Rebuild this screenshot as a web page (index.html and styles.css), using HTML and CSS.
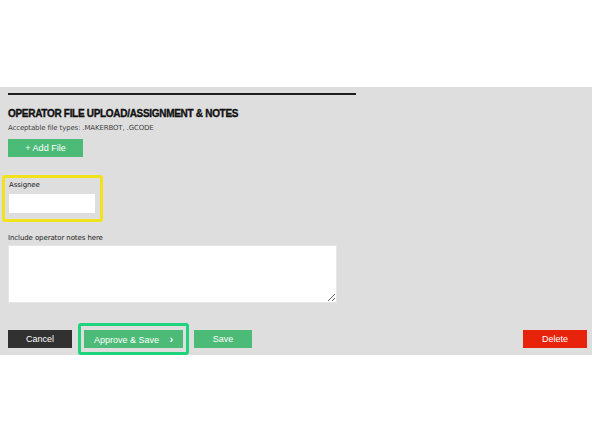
FILE: index.html
```html
<!DOCTYPE html>
<html lang="en">
<head>
    <meta charset="UTF-8">
    <meta name="viewport" content="width=device-width, initial-scale=1.0">
    <title>Operator File Upload</title>
    <link rel="stylesheet" href="styles.css">
</head>
<body>
    <div class="panel">
        <div class="rule"></div>
        <h2>OPERATOR FILE UPLOAD/ASSIGNMENT &amp; NOTES</h2>
        <p class="hint">Acceptable file types: .MAKERBOT, .GCODE</p>
        <button class="btn btn-green btn-add">+ Add File</button>

        <div class="highlight-yellow">
            <label for="assignee">Assignee</label>
            <input type="text" id="assignee" class="input-field">
        </div>

        <div class="form-group">
            <label for="notes">Include operator notes here</label>
            <textarea id="notes" class="notes"></textarea>
        </div>

        <div class="actions">
            <button class="btn btn-dark">Cancel</button>
            <div class="highlight-green">
                <button class="btn btn-green btn-approve">Approve &amp; Save <span class="chev">&#8250;</span></button>
            </div>
            <button class="btn btn-green btn-save">Save</button>
            <button class="btn btn-red">Delete</button>
        </div>
    </div>
</body>
</html>
```

FILE: styles.css
```css
body {
    margin: 0;
    padding: 0;
    background-color: #fff;
    font-family: "DejaVu Sans", Verdana, sans-serif;
    color: #222;
}

.panel {
    margin-top: 87px;
    padding: 6px 5px 0 8px;
    height: 262px;
    background-color: #dedede;
}

.rule {
    width: 348px;
    border-top: 2px solid #1e1e1e;
}

h2 {
    margin: 12px 0 0 0;
    font-family: "Liberation Sans", Arial, sans-serif;
    font-size: 10px;
    font-weight: bold;
    line-height: 13px;
    letter-spacing: -0.3px;
    -webkit-text-stroke: 0.35px #111;
    color: #111;
}

.hint {
    margin: 3px 0 0 0;
    font-size: 7px;
    line-height: 10px;
    letter-spacing: -0.15px;
    color: #444;
}

.btn {
    display: block;
    height: 18px;
    padding: 0;
    border: none;
    font-family: "Liberation Sans", Arial, sans-serif;
    font-size: 9px;
    color: #fff;
    cursor: pointer;
}

.btn-green {
    background-color: #4dbb78;
}

.btn-dark {
    background-color: #313131;
    width: 64px;
}

.btn-red {
    background-color: #e8230b;
    width: 64px;
    margin-left: auto;
}

.btn-add {
    margin-top: 6px;
    width: 75px;
}

.highlight-yellow {
    width: 86px;
    margin: 18px 0 0 -6px;
    padding: 2px 5px 6px 4px;
    border: 3px solid #f2e21c;
    border-radius: 3px;
}

label {
    display: block;
    font-size: 7px;
    line-height: 10px;
    letter-spacing: -0.1px;
    color: #222;
}

.highlight-yellow label {
    margin-bottom: 4px;
}

.input-field {
    display: block;
    width: 86px;
    height: 19px;
    padding: 0;
    border: none;
    background-color: #fff;
    box-sizing: border-box;
}

.form-group {
    margin-top: 11px;
}

.form-group label {
    margin-bottom: 2px;
}

.notes {
    display: block;
    width: 329px;
    height: 58px;
    padding: 0;
    border: 1px solid #e6e6e6;
    background-color: #fff;
    box-sizing: border-box;
}

.actions {
    display: flex;
    align-items: center;
    margin-top: 20px;
}

.highlight-green {
    margin-left: 6px;
    padding: 4px 3px 4px 3px;
    border: 3px solid #1fd47c;
    border-radius: 3px;
}

.btn-approve {
    width: 99px;
}

.chev {
    margin-left: 8px;
    font-weight: bold;
    font-size: 11px;
}

.btn-save {
    margin-left: 5px;
    width: 58px;
}
```
